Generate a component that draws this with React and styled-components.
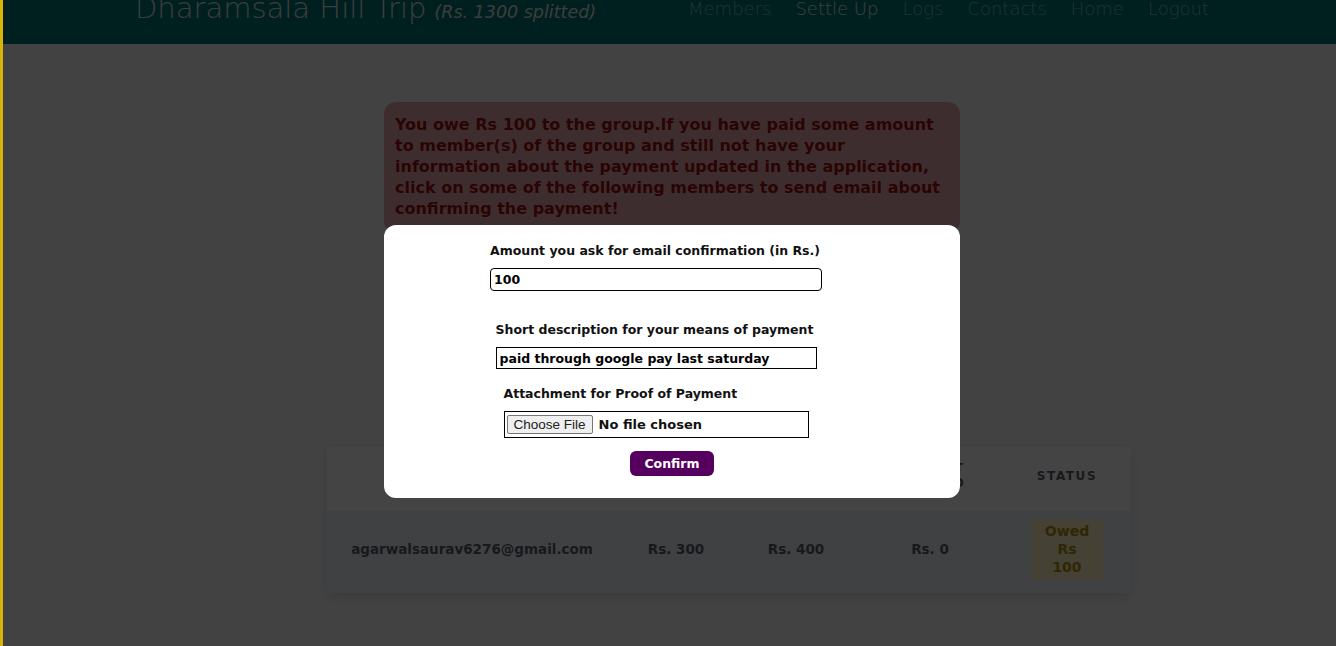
import React, { useState } from "react";
import styled, { createGlobalStyle } from "styled-components";

const GlobalStyle = createGlobalStyle`
  html, body {
    margin: 0;
    padding: 0;
    height: 100%;
    overflow: hidden;
  }
  body {
    border-left: 3px solid #d8b406;
    font-family: "DejaVu Sans", "Noto Sans", sans-serif;
  }
`;

const Page = styled.div`
  position: relative;
  min-height: 646px;
  background: #f5f5f5;
`;

const Header = styled.header`
  height: 44px;
  background: #007878;
  display: flex;
  align-items: flex-start;
  padding-left: 132px;
  overflow: hidden;
`;

const Title = styled.h1`
  margin: -9px 0 0;
  font-size: 29px;
  font-weight: 200;
  color: #dedede;
  white-space: nowrap;
  width: 553px;

  small {
    font-size: 17.5px;
    font-style: italic;
    margin-left: 8px;
  }
`;

const Nav = styled.nav`
  display: flex;
  gap: 24px;
  margin-top: -2px;
`;

const NavLink = styled.a`
  font-size: 18px;
  font-weight: 200;
  color: ${(p) => (p.active ? "#e2e2e2" : "rgba(255,255,255,0.48)")};
  text-decoration: none;
  white-space: nowrap;
`;

const Main = styled.main`
  padding-top: 58px;
  display: flex;
  flex-direction: column;
`;

const Alert = styled.div`
  width: 554px;
  margin-left: 381px;
  padding: 12px 11px 14px;
  background: #e6a8ac;
  border-radius: 12px;
  color: #9a1212;
  font-size: 16px;
  font-weight: 700;
  line-height: 21px;
`;

const Card = styled.div`
  width: 804px;
  margin: 214px 0 0 324px;
  background: #edf0f8;
  box-shadow: 0 4px 12px rgba(0, 0, 0, 0.12);
`;

const Table = styled.table`
  width: 100%;
  border-collapse: collapse;
  table-layout: fixed;
  color: #5a5c68;
`;

const Th = styled.th`
  height: 64px;
  box-sizing: border-box;
  padding: 0 0 6px;
  background: #fbfbfb;
  font-size: 12px;
  font-weight: 700;
  letter-spacing: 1.6px;
  text-transform: uppercase;
  text-align: center;
  line-height: 15px;
  width: ${(p) => p.w}px;
`;

const Td = styled.td`
  height: 82px;
  box-sizing: border-box;
  padding: 0 0 6px;
  text-align: center;
  font-size: 13.5px;
  font-weight: 600;
`;

const Badge = styled.span`
  display: inline-block;
  width: 72px;
  padding: 3px 0 4px;
  background: #fff0c0;
  color: #ad8e10;
  font-size: 14px;
  font-weight: 700;
  line-height: 18px;
`;

const Overlay = styled.div`
  position: absolute;
  inset: 0;
  background: rgba(0, 0, 0, 0.73);
`;

const Modal = styled.div`
  position: absolute;
  top: 225px;
  left: 381px;
  width: 576px;
  height: 273px;
  background: #fff;
  border-radius: 12px;
  display: flex;
  flex-direction: column;
  align-items: center;
  box-sizing: border-box;
  padding-top: 18px;
`;

const Groups = styled.div`
  display: flex;
  flex-direction: column;
  align-items: center;
  margin-right: 32px;
`;

const Group = styled.div`
  width: ${(p) => p.w}px;
  margin-bottom: ${(p) => p.mb}px;
`;

const Label = styled.label`
  display: block;
  font-size: 12.5px;
  line-height: 15px;
  font-weight: 600;
  color: #111;
  white-space: nowrap;
  margin-bottom: ${(p) => p.mb}px;
`;

const TextInput = styled.input`
  display: block;
  box-sizing: border-box;
  width: 100%;
  height: ${(p) => p.h}px;
  border: 1px solid #000;
  border-radius: ${(p) => p.r}px;
  padding: 0 3px;
  font-family: inherit;
  font-size: 12.5px;
  font-weight: 700;
  color: #000;
  outline: none;
`;

const FileBox = styled.div`
  box-sizing: border-box;
  height: 27px;
  border: 1px solid #000;
  padding: 2px 2px;
  display: flex;
  align-items: center;
`;

const FileInput = styled.input`
  font-family: inherit;
  font-size: 13px;
  font-weight: 700;
  color: #111;

  &::file-selector-button {
    font-family: "Liberation Sans", Arial, sans-serif;
    font-size: 13.5px;
    font-weight: 400;
    color: #222;
    background: #efefef;
    border: 1px solid #767676;
    border-radius: 2px;
    padding: 1px 6px;
    margin-right: 6px;
  }
`;

const Confirm = styled.button`
  margin-top: 13px;
  height: 25px;
  padding: 0 14px;
  background: #55005f;
  color: #fff;
  border: none;
  border-radius: 6px;
  font-family: inherit;
  font-size: 12.5px;
  font-weight: 700;
`;

const navItems = ["Members", "Settle Up", "Logs", "Contacts", "Home", "Logout"];

export default function App() {
  const [amount, setAmount] = useState("100");
  const [desc, setDesc] = useState("paid through google pay last saturday");

  return (
    <>
      <GlobalStyle />
      <Page>
        <Header>
          <Title>
            Dharamsala Hill Trip<small>(Rs. 1300 splitted)</small>
          </Title>
          <Nav>
            {navItems.map((n) => (
              <NavLink key={n} href="#" active={n === "Settle Up" ? 1 : 0}>
                {n}
              </NavLink>
            ))}
          </Nav>
        </Header>

        <Main>
          <Alert>
            You owe Rs 100 to the group.If you have paid some amount to member(s) of the group and still not
            have your information about the payment updated in the application, click on some of the following
            members to send email about confirming the payment!
          </Alert>

          <Card>
            <Table>
              <thead>
                <tr>
                  <Th w={290}>Member</Th>
                  <Th w={118}>Share</Th>
                  <Th w={122}>Paid</Th>
                  <Th w={146}>
                    Amount
                    <br />
                    Settled
                  </Th>
                  <Th w={128}>Status</Th>
                </tr>
              </thead>
              <tbody>
                <tr>
                  <Td>agarwalsaurav6276@gmail.com</Td>
                  <Td>Rs. 300</Td>
                  <Td>Rs. 400</Td>
                  <Td>Rs. 0</Td>
                  <Td>
                    <Badge>
                      Owed
                      <br />
                      Rs
                      <br />
                      100
                    </Badge>
                  </Td>
                </tr>
              </tbody>
            </Table>
          </Card>
        </Main>

        <Overlay />

        <Modal>
          <Groups>
            <Group w={332} mb={31}>
              <Label mb={10}>Amount you ask for email confirmation (in Rs.)</Label>
              <TextInput h={23} r={4} value={amount} onChange={(e) => setAmount(e.target.value)} />
            </Group>
            <Group w={321} mb={17}>
              <Label mb={10}>Short description for your means of payment</Label>
              <TextInput h={22} r={0} value={desc} onChange={(e) => setDesc(e.target.value)} />
            </Group>
            <Group w={305} mb={0}>
              <Label mb={10}>Attachment for Proof of Payment</Label>
              <FileBox>
                <FileInput type="file" />
              </FileBox>
            </Group>
          </Groups>
          <Confirm>Confirm</Confirm>
        </Modal>
      </Page>
    </>
  );
}
